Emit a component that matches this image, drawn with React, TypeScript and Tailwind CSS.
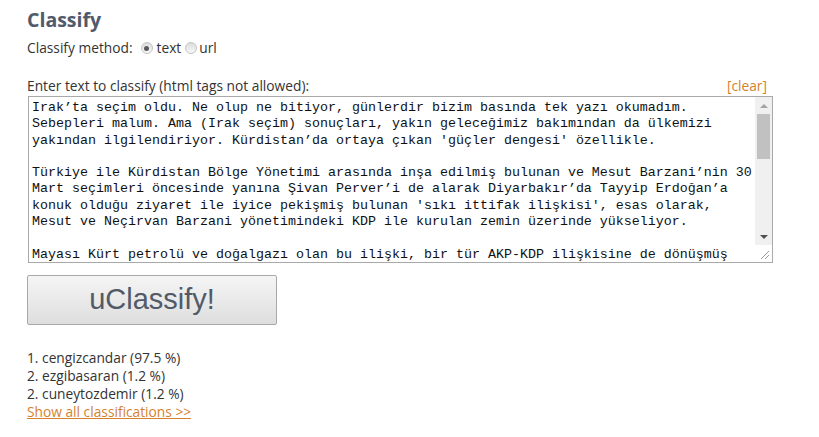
import React from "react";

const text = `Irak’ta seçim oldu. Ne olup ne bitiyor, günlerdir bizim basında tek yazı okumadım.
Sebepleri malum. Ama (Irak seçim) sonuçları, yakın geleceğimiz bakımından da ülkemizi
yakından ilgilendiriyor. Kürdistan’da ortaya çıkan 'güçler dengesi' özellikle.

Türkiye ile Kürdistan Bölge Yönetimi arasında inşa edilmiş bulunan ve Mesut Barzani’nin 30
Mart seçimleri öncesinde yanına Şivan Perver’i de alarak Diyarbakır’da Tayyip Erdoğan’a
konuk olduğu ziyaret ile iyice pekişmiş bulunan 'sıkı ittifak ilişkisi', esas olarak,
Mesut ve Neçirvan Barzani yönetimindeki KDP ile kurulan zemin üzerinde yükseliyor.

Mayası Kürt petrolü ve doğalgazı olan bu ilişki, bir tür AKP-KDP ilişkisine de dönüşmüş
bulunuyor.`;

function Radio({ checked }: { checked?: boolean }) {
  return (
    <span className="inline-flex h-[12px] w-[12px] items-center justify-center rounded-full border border-[#c4c4c4] bg-gradient-to-b from-[#dcdcdc] to-[#f8f8f8]">
      {checked && <span className="h-[5px] w-[5px] rounded-full bg-[#5a5a5a]" />}
    </span>
  );
}

export default function App() {
  return (
    <div className="h-[437px] w-[819px] bg-white pl-[27px] pt-[6px] text-[13.75px] text-[#333]" style={{ fontFamily: '"Open Sans", "DejaVu Sans", sans-serif' }}>
      <h1 className="text-[19.5px] font-bold leading-[28px] text-[#4f5a6b]">Classify</h1>
      <div className="mt-[5px] flex h-[18px] items-center">
        <span>Classify method:</span>
        <span className="ml-[8px] mr-[4px] flex"><Radio checked /></span>
        <span>text</span>
        <span className="ml-[4px] mr-[2px] flex"><Radio /></span>
        <span>url</span>
      </div>
      <div className="mt-[20px] flex w-[746px] items-center justify-between leading-[18px]">
        <span>Enter text to classify (html tags not allowed):</span>
        <span className="pr-[6px] text-[#d4822e]">[clear]</span>
      </div>
      <div className="ml-[1px] mt-[1px] flex h-[167px] w-[745px] border border-[#a9a9a9] bg-white">
        <div
          className="flex-1 overflow-hidden whitespace-pre pl-[3px] pt-[3px] text-[13.33px] leading-[16.3px] text-[#111]"
          style={{ fontFamily: '"Liberation Mono", "Courier New", monospace' }}
        >
          {text}
        </div>
        <div className="flex w-[17px] flex-col bg-[#f0f0f0]">
          <div className="flex h-[17px] items-center justify-center">
            <span className="h-0 w-0 border-x-[4px] border-b-[4px] border-x-transparent border-b-[#a3a3a3]" />
          </div>
          <div className="mx-[2px] h-[45px] bg-[#c1c1c1]" />
          <div className="flex-1" />
          <div className="flex h-[17px] items-center justify-center">
            <span className="h-0 w-0 border-x-[4px] border-t-[4px] border-x-transparent border-t-[#505050]" />
          </div>
          <div className="relative h-[17px] bg-white">
            <svg width="17" height="17" className="absolute left-0 top-0">
              <line x1="14" y1="6" x2="6" y2="14" stroke="#999" strokeWidth="1" />
              <line x1="14" y1="10" x2="10" y2="14" stroke="#999" strokeWidth="1" />
            </svg>
          </div>
        </div>
      </div>
      <button
        className="mt-[12px] flex h-[50px] w-[250px] items-center justify-center rounded-[2px] border border-[#a8a8a8] bg-gradient-to-b from-[#f5f5f5] to-[#dedede] text-[29px] text-[#525a68]"
        style={{ fontFamily: '"Liberation Sans", Arial, sans-serif' }}
      >
        uClassify!
      </button>
      <div className="mt-[24px] leading-[18px]">
        <div>1. cengizcandar (97.5 %)</div>
        <div>2. ezgibasaran (1.2 %)</div>
        <div>2. cuneytozdemir (1.2 %)</div>
        <div className="text-[#d4822e] underline">Show all classifications &gt;&gt;</div>
      </div>
    </div>
  );
}
